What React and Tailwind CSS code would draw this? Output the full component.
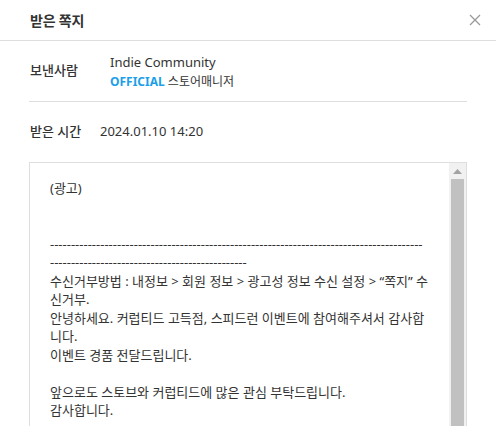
import React from "react";

export default function App() {
  const lines = [
    "(광고)",
    "",
    "",
    "-".repeat(89),
    "-".repeat(47),
    "수신거부방법 : 내정보 > 회원 정보 > 광고성 정보 수신 설정 > “쪽지” 수",
    "신거부.",
    "안녕하세요. 커럽티드 고득점, 스피드런 이벤트에 참여해주셔서 감사합",
    "니다.",
    "이벤트 경품 전달드립니다.",
    "",
    "앞으로도 스토브와 커럽티드에 많은 관심 부탁드립니다.",
    "감사합니다.",
    "",
  ];
  return (
    <div
      className="w-[496px] h-[426px] bg-white overflow-hidden text-[#333]"
      style={{ fontFamily: '"Noto Sans", "Noto Sans CJK KR", sans-serif' }}
    >
      <div className="h-[41px] border-b border-[#dedede] flex items-center justify-between pl-[30px] pr-[14px]">
        <span className="text-[14px] font-bold tracking-[-0.2px]">받은 쪽지</span>
        <svg width="12" height="12" viewBox="0 0 12 12" className="mr-[1px]">
          <path d="M1 1L11 11M11 1L1 11" stroke="#9a9a9a" strokeWidth="1.3" fill="none" />
        </svg>
      </div>
      <div className="px-[29px]">
        <div className="h-[61px] border-b border-[#dedede] flex items-center">
          <span className="w-[81px] pl-[1px] text-[13px] font-medium">보낸사람</span>
          <div className="flex flex-col leading-[19px] pt-[1px]">
            <span className="text-[13px]">Indie Community</span>
            <span className="text-[12px]">
              <span className="font-bold text-[#1c9fe8]">OFFICIAL</span> 스토어매니저
            </span>
          </div>
        </div>
        <div className="h-[60px] flex items-center">
          <span className="w-[71px] pl-[1px] text-[13px] font-medium">받은 시간</span>
          <span className="text-[13px]">2024.01.10 14:20</span>
        </div>
        <div className="h-[300px] border border-[#dedede] flex">
          <div className="flex-1 pl-[20px] pt-[16px] text-[13px] leading-[18.5px]">
            {lines.map((l, i) => (
              <div key={i} className="h-[18.5px] whitespace-pre overflow-hidden">
                {l}
              </div>
            ))}
          </div>
          <div className="w-[17px] bg-[#f1f1f1] flex flex-col items-center">
            <div className="h-[16px] flex items-center justify-center">
              <svg width="9" height="5" viewBox="0 0 9 5">
                <path d="M0 5L4.5 0L9 5Z" fill="#a3a3a3" />
              </svg>
            </div>
            <div className="w-[13px] flex-1 bg-[#c1c1c1]" />
          </div>
        </div>
      </div>
    </div>
  );
}
